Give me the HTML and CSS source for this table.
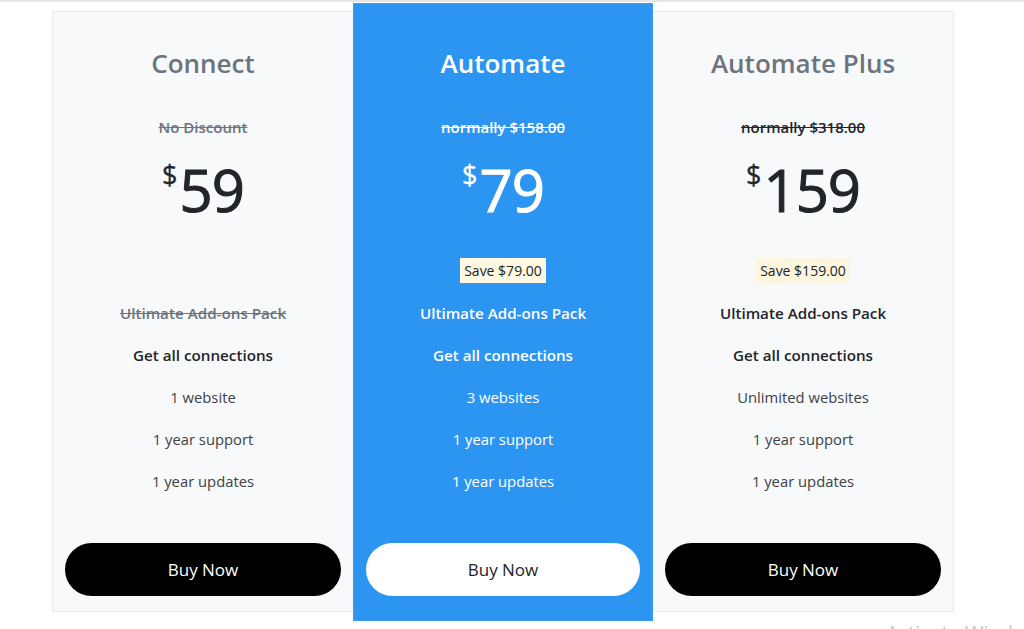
FILE: index.html
```html
<!DOCTYPE html>
<html>
<head>
<meta charset="utf-8">
<link rel="stylesheet" href="styles.css">
</head>
<body>
<div class="topline"></div>
<div class="plans">
  <div class="card">
    <h2 class="title">Connect</h2>
    <div class="was">No Discount</div>
    <div class="price"><span class="cur">$</span><span class="amt">59</span></div>
    <div class="save-row"><span class="save hidden">Save $0.00</span></div>
    <ul class="features">
      <li class="bold struck">Ultimate Add-ons Pack</li>
      <li class="bold">Get all connections</li>
      <li>1 website</li>
      <li>1 year support</li>
      <li>1 year updates</li>
    </ul>
    <div class="btn-row"><a class="btn">Buy Now</a></div>
  </div>
  <div class="card featured">
    <h2 class="title">Automate</h2>
    <div class="was">normally $158.00</div>
    <div class="price"><span class="cur">$</span><span class="amt">79</span></div>
    <div class="save-row"><span class="save">Save $79.00</span></div>
    <ul class="features">
      <li class="bold">Ultimate Add-ons Pack</li>
      <li class="bold">Get all connections</li>
      <li>3 websites</li>
      <li>1 year support</li>
      <li>1 year updates</li>
    </ul>
    <div class="btn-row"><a class="btn">Buy Now</a></div>
  </div>
  <div class="card">
    <h2 class="title">Automate Plus</h2>
    <div class="was">normally $318.00</div>
    <div class="price"><span class="cur">$</span><span class="amt">159</span></div>
    <div class="save-row"><span class="save">Save $159.00</span></div>
    <ul class="features">
      <li class="bold">Ultimate Add-ons Pack</li>
      <li class="bold">Get all connections</li>
      <li>Unlimited websites</li>
      <li>1 year support</li>
      <li>1 year updates</li>
    </ul>
    <div class="btn-row"><a class="btn">Buy Now</a></div>
  </div>
</div>
<div class="watermark">Activate Windows</div>
</body>
</html>
```
FILE: styles.css
```css
* { box-sizing: border-box; }
html, body { margin: 0; padding: 0; }
body {
  background: #ffffff;
  font-family: "Open Sans", "Noto Sans", sans-serif;
  color: #212529;
  width: 1024px;
  height: 629px;
  overflow: hidden;
  position: relative;
}
.topline {
  height: 2px;
  background: #e6e6e6;
}
.plans {
  display: flex;
  padding-top: 9px;
  padding-left: 52px;
}
.card {
  width: 301px;
  height: 601px;
  background: #f8f9fa;
  border: 1px solid #e8eaed;
  display: flex;
  flex-direction: column;
  align-items: center;
  padding-top: 31px;
  text-align: center;
}
.card:first-child { border-right: none; }
.card:last-child { border-left: none; }
.featured {
  width: 300px;
  background: #2c95f2;
  border: 1px solid #3a9cef;
  margin-top: -8px;
  height: 618px;
  padding-top: 39px;
  color: #ffffff;
  position: relative;
  z-index: 1;
}
.title {
  margin: 0;
  height: 40px;
  line-height: 40px;
  font-size: 26px;
  font-weight: 600;
  color: #6c757d;
}
.featured .title { color: #ffffff; }
.was {
  margin-top: 32px;
  height: 24px;
  line-height: 24px;
  font-size: 15px;
  font-weight: 600;
  text-decoration: line-through;
  color: #6c757d;
}
.card:last-child .was { color: #212529; }
.featured .was { color: #ffffff; }
.price {
  margin-top: 16px;
  height: 70px;
  display: flex;
  align-items: flex-start;
  justify-content: center;
  color: #212529;
}
.featured .price { color: #ffffff; }
.cur {
  font-size: 27px;
  line-height: 30px;
  margin-top: 5px;
  margin-right: 2px;
  -webkit-text-stroke: 0.3px currentColor;
}
.amt {
  font-size: 58px;
  line-height: 70px;
  letter-spacing: -1px;
  -webkit-text-stroke: 1px currentColor;
}
.save-row {
  margin-top: 33px;
  height: 25px;
}
.save {
  display: inline-block;
  height: 25px;
  line-height: 25px;
  padding: 0 4px;
  background: #fdf5de;
  color: #212529;
  font-size: 14px;
}
.featured .save { background: #fff8e3; }
.hidden { visibility: hidden; }
.features {
  list-style: none;
  margin: 9px 0 0;
  padding: 0;
}
.features li {
  height: 42px;
  line-height: 42px;
  font-size: 14.8px;
  color: #3d4246;
}
.featured .features li { color: #ffffff; }
.features li.bold { font-weight: 600; font-size: 15.2px; color: #212529; }
.featured .features li.bold { color: #ffffff; }
.features li.struck { text-decoration: line-through; color: #6c757d; }
.btn-row {
  margin-top: 41px;
  width: 100%;
  padding: 0 12px;
}
.btn {
  display: block;
  height: 53px;
  line-height: 53px;
  border-radius: 27px;
  background: #000000;
  color: #ffffff;
  font-size: 17px;
  text-decoration: none;
}
.featured .btn {
  background: #ffffff;
  color: #212529;
}
.watermark {
  position: absolute;
  left: 886px;
  top: 619px;
  font-size: 20px;
  color: #c8c8c8;
  white-space: nowrap;
}
```
